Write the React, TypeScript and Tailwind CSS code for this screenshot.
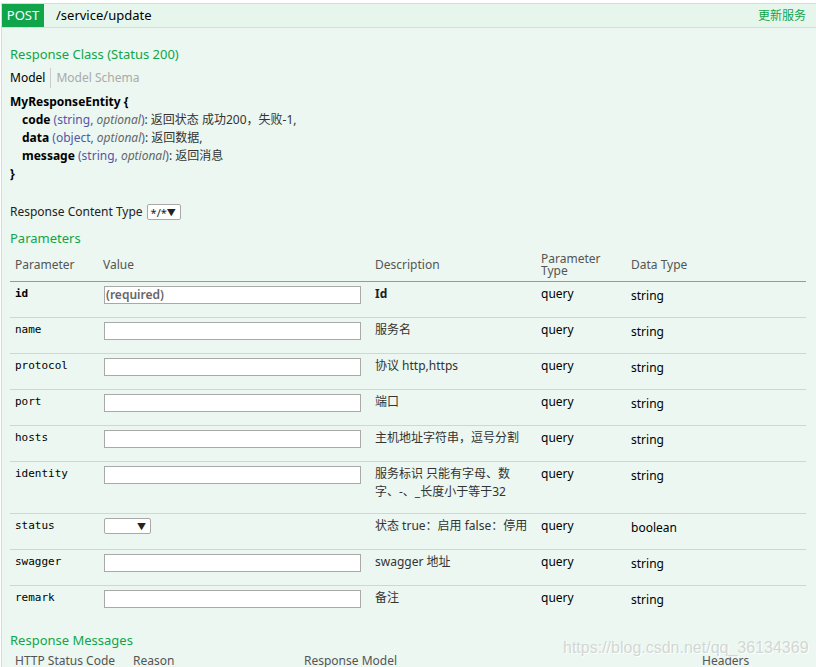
import React from 'react';

type Param = {
  name: string;
  required?: boolean;
  desc: React.ReactNode;
  kind: 'text' | 'select';
  dataType: string;
};

const params: Param[] = [
  { name: 'id', required: true, desc: <b className="text-[#222]">Id</b>, kind: 'text', dataType: 'string' },
  { name: 'name', desc: '服务名', kind: 'text', dataType: 'string' },
  { name: 'protocol', desc: '协议 http,https', kind: 'text', dataType: 'string' },
  { name: 'port', desc: '端口', kind: 'text', dataType: 'string' },
  { name: 'hosts', desc: '主机地址字符串，逗号分割', kind: 'text', dataType: 'string' },
  { name: 'identity', desc: '服务标识 只能有字母、数字、-、_长度小于等于32', kind: 'text', dataType: 'string' },
  { name: 'status', desc: '状态 true：启用 false：停用', kind: 'select', dataType: 'boolean' },
  { name: 'swagger', desc: 'swagger 地址', kind: 'text', dataType: 'string' },
  { name: 'remark', desc: '备注', kind: 'text', dataType: 'string' },
];

const modelProps = [
  { key: 'code', type: 'string', desc: '返回状态 成功200，失败-1,' },
  { key: 'data', type: 'object', desc: '返回数据,' },
  { key: 'message', type: 'string', desc: '返回消息' },
];

function FakeSelect({ label, className }: { label?: string; className: string }) {
  return (
    <div
      className={
        'flex items-center justify-between bg-white border border-[#a9a9a9] rounded-[2px] text-[11px] leading-none text-[#222] ' +
        className
      }
    >
      <span>{label}</span>
      <span className="text-[9px]">▼</span>
    </div>
  );
}

export default function App() {
  return (
    <div className="relative h-[667px] overflow-hidden bg-white font-['Noto_Sans','Noto_Sans_CJK_SC',sans-serif] text-[12px] text-[#222]">
      <div className="ml-px mt-[3px] w-[816px]">
        {/* Heading bar */}
        <div className="flex h-[25px] items-stretch border border-[#c3e8d1] bg-[#e7f6ec]">
          <span className="flex w-[42px] items-center justify-center bg-[#10a54a] text-[13px] text-white">
            POST
          </span>
          <span className="ml-[12px] flex items-center text-[13px] text-black">/service/update</span>
          <span className="ml-auto flex items-center pr-[10px] text-[12px] text-[#10a54a]">更新服务</span>
        </div>

        {/* Content */}
        <div className="border-x border-b border-[#c3e8d1] bg-[#ebf7f0] pl-[8px] pr-[10px] pt-[17px] pb-[20px]">
          <h4 className="text-[13px] leading-[18px] text-[#10a54a]">Response Class (Status 200)</h4>

          <div className="mt-[5px] flex leading-[20px]">
            <span className="border-r border-[#ccc] pr-[5px] text-black">Model</span>
            <span className="pl-[5px] text-[#aaa]">Model Schema</span>
          </div>

          <div className="mt-[5px] leading-[18px]">
            <div className="font-bold text-black">MyResponseEntity {'{'}</div>
            {modelProps.map((p) => (
              <div key={p.key} className="pl-[12px]">
                <b className="text-black">{p.key}</b>{' '}
                <span className="text-[#55a]">
                  ({p.type}, <i className="text-[#666]">optional</i>)
                </span>
                <span className="text-[#333]">: {p.desc}</span>
              </div>
            ))}
            <div className="font-bold text-black">{'}'}</div>
          </div>

          <div className="mt-[20px] flex items-center gap-[4px] leading-[18px]">
            <span>Response Content Type</span>
            <FakeSelect label="*/*" className="h-[16px] w-[34px] pl-[3px] pr-[4px]" />
          </div>

          <h4 className="mt-[8px] text-[13px] leading-[18px] text-[#10a54a]">Parameters</h4>

          <table className="w-full table-fixed border-collapse">
            <colgroup>
              <col className="w-[90px]" />
              <col className="w-[270px]" />
              <col className="w-[166px]" />
              <col className="w-[90px]" />
              <col />
            </colgroup>
            <thead>
              <tr className="border-b border-[#999] text-left text-[#555]">
                <th className="pl-[5px] pt-[6px] pb-[4px] align-middle font-normal leading-[12px]">Parameter</th>
                <th className="pl-[3px] pt-[6px] pb-[4px] align-middle font-normal leading-[12px]">Value</th>
                <th className="pl-[5px] pt-[6px] pb-[4px] align-middle font-normal leading-[12px]">Description</th>
                <th className="pl-[5px] pt-[6px] pb-[4px] align-middle font-normal leading-[12px]">
                  Parameter
                  <br />
                  Type
                </th>
                <th className="pl-[5px] pt-[6px] pb-[4px] align-middle font-normal leading-[12px]">Data Type</th>
              </tr>
            </thead>
            <tbody>
              {params.map((p, i) => (
                <tr key={p.name} className={i === 0 ? '' : 'border-t border-[#d4d4d4]'}>
                  <td
                    className={
                      "pl-[5px] pt-[4px] align-top font-['DejaVu_Sans_Mono',monospace] text-[11px] leading-[16px] text-black " +
                      (p.required ? 'font-bold' : '')
                    }
                  >
                    {p.name}
                  </td>
                  <td className="pl-[4px] pt-[4px] pb-[13px] align-top">
                    {p.kind === 'text' ? (
                      <input
                        className={
                          'block h-[18px] w-[257px] border border-[#a9a9a9] bg-white px-[1px] text-[12px] outline-none placeholder:text-[#666] ' +
                          (p.required ? 'font-semibold' : '')
                        }
                        placeholder={p.required ? '(required)' : ''}
                      />
                    ) : (
                      <div className="h-[18px]">
                        <FakeSelect className="h-[16px] w-[47px] pl-[3px] pr-[4px]" />
                      </div>
                    )}
                  </td>
                  <td className="pl-[5px] pr-[5px] pt-[3px] pb-[12px] align-top leading-[18px] text-[#333]">
                    {p.desc}
                  </td>
                  <td className="pl-[5px] pt-[4px] align-top leading-[16px] text-black">query</td>
                  <td className="pl-[5px] pt-[6px] align-top leading-[16px] text-black">{p.dataType}</td>
                </tr>
              ))}
            </tbody>
          </table>

          <h4 className="mt-[10px] text-[13px] leading-[18px] text-[#10a54a]">Response Messages</h4>
          <div className="flex pt-[4px] leading-[16px] text-[#555]">
            <span className="w-[123px] pl-[5px]">HTTP Status Code</span>
            <span className="w-[171px]">Reason</span>
            <span className="w-[398px]">Response Model</span>
            <span>Headers</span>
          </div>
        </div>
      </div>

      {/* Blog watermark */}
      <div className="pointer-events-none absolute left-[563px] top-[637px] font-['Liberation_Sans',sans-serif] text-[16px] leading-[22px] text-[#d3d7d4] [text-shadow:1px_1px_0_#ffffff]">
        https://blog.csdn.net/qq_36134369
      </div>
    </div>
  );
}
